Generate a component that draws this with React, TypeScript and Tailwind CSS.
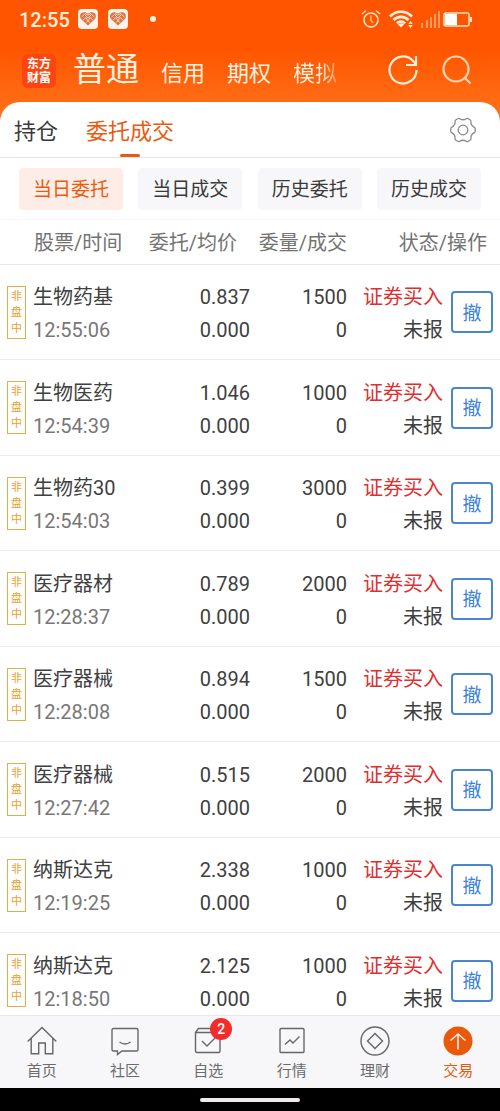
import type { ReactNode } from "react";

type Order = { name: string; time: string; price: string; quantity: string };

const orders: Order[] = [
  { name: "生物药基", time: "12:55:06", price: "0.837", quantity: "1500" },
  { name: "生物医药", time: "12:54:39", price: "1.046", quantity: "1000" },
  { name: "生物药30", time: "12:54:03", price: "0.399", quantity: "3000" },
  { name: "医疗器材", time: "12:28:37", price: "0.789", quantity: "2000" },
  { name: "医疗器械", time: "12:28:08", price: "0.894", quantity: "1500" },
  { name: "医疗器械", time: "12:27:42", price: "0.515", quantity: "2000" },
  { name: "纳斯达克", time: "12:19:25", price: "2.338", quantity: "1000" },
  { name: "纳斯达克", time: "12:18:50", price: "2.125", quantity: "1000" },
];

const filters = ["当日委托", "当日成交", "历史委托", "历史成交"];

function HeartBadge() {
  return (
    <svg width="20" height="20" viewBox="0 0 20 20" aria-hidden="true">
      <rect width="20" height="20" rx="4" fill="#fff3ea" />
      <path d="M10 16.500 3 10C.6 6.500 3 2.800 7 3.300L10 4.500l3-1.200c4-.5 6.400 3.200 4 6.700z" fill="#dd7546" />
      <path d="m3.500 8 3-2.500L10 9l3.500-3.500 3 2.500M5 11l3-2.500L10 12l2-3.500 3 2.500M8 13.500l2-1.500 2 1.500M7 4.500l3 1.500 3-1.500" fill="none" stroke="#ffe9d6" strokeWidth=".8" />
    </svg>
  );
}

function StatusBar() {
  return (
    <div className="flex h-[38px] items-center pl-[19px] pr-7 text-[#fff1df]">
      <span className="pt-px text-xl font-medium">12:55</span>
      <div className="ml-2 flex gap-[10px]">
        <HeartBadge />
        <HeartBadge />
      </div>
      <span className="ml-[22px] size-[6px] rounded-full bg-[#fff1df]" />
      <div className="ml-auto flex items-center gap-2">
        <svg width="20" height="20" viewBox="0 0 20 20" fill="none" stroke="#ffe3c2" strokeWidth="1.600" strokeLinecap="round" aria-hidden="true">
          <circle cx="10" cy="11" r="7" />
          <path d="M1.500 4.500 4.500 2M18.500 4.500l-3-2.500" />
          <path d="M9.800 7v4.300l2 2.200" stroke="#ffc34d" />
        </svg>
        <svg width="24" height="20" viewBox="0 0 24 20" fill="none" stroke="#fff1df" strokeWidth="2.600" aria-hidden="true">
          <path d="M1 7.500a15 15 0 0 1 22 0M4.500 11a10.500 10.500 0 0 1 15 0M8 14.300a5.500 5.500 0 0 1 8 0" />
          <path d="m9 15.500 3 3 3-3a4 4 0 0 0-6 0z" fill="#fff1df" stroke="none" />
          <path d="m21.500 12 2.200 3h-4.400zM21.500 19l2.200-3h-4.400z" fill="#fff1df" stroke="none" />
        </svg>
        <div className="flex items-center gap-[2px]">
          <svg width="20" height="18" viewBox="0 0 20 18" fill="#ff9d63" aria-hidden="true">
            <rect x="0" y="13" width="2" height="5" />
            <rect x="5" y="10" width="2" height="8" />
            <rect x="9" y="7" width="2" height="11" />
            <rect x="13" y="4" width="2" height="14" />
            <rect x="17" y="1" width="2" height="17" />
          </svg>
          <svg width="29" height="15" viewBox="0 0 29 15" aria-hidden="true">
            <rect x="1" y="1" width="25" height="13" rx="2" fill="none" stroke="#ffe3c2" strokeWidth="1.500" />
            <rect x="2" y="2" width="12" height="11" fill="#fff" />
            <rect x="27" y="5" width="2" height="5" fill="#ffe3c2" />
          </svg>
        </div>
      </div>
    </div>
  );
}

function Header() {
  return (
    <header className="flex h-16 items-center pl-[22px] pr-7 pt-px text-[#fff1df]">
      <div className="flex size-[34px] flex-col items-center justify-center rounded-md bg-[#fc4510] text-xs leading-[14px] font-bold text-white">
        <span>东方</span>
        <span>财富</span>
      </div>
      <nav className="ml-[17px] flex items-baseline gap-[22px] whitespace-nowrap pt-[3px] text-[22px] leading-10">
        <a href="#normal" className="text-[33px]">普通</a>
        <a href="#credit">信用</a>
        <a href="#option">期权</a>
        <a href="#mock" className="bg-linear-to-r from-[#fff1df] from-60% to-[#ff9450] bg-clip-text text-transparent">模拟</a>
      </nav>
      <div className="ml-auto flex items-center gap-6 pb-px">
        <button type="button" aria-label="刷新">
          <svg width="30" height="30" viewBox="0 0 30 30" fill="none" stroke="#ffeeda" strokeWidth="2.200">
            <path d="M28.500 15A13.500 13.500 0 1 1 24.600 5.500L28 9" />
            <path d="M28 1v9h-10" />
          </svg>
        </button>
        <button type="button" aria-label="搜索">
          <svg width="30" height="30" viewBox="0 0 30 30" fill="none" stroke="#ffd5b0" strokeWidth="2.200">
            <circle cx="14" cy="14" r="12.500" />
            <path d="m23 23 5.500 5.500" />
          </svg>
        </button>
      </div>
    </header>
  );
}

function Tabs() {
  return (
    <div className="flex h-14 shrink-0 items-stretch border-b border-[#e4e4e6] pl-[14px] pr-6 text-[22px]">
      <button type="button" className="pt-[3px] text-[#3a3a3a]">持仓</button>
      <button type="button" className="relative ml-7 pt-[3px] text-[#ea5b10]">
        委托成交
        <span className="absolute bottom-0 left-1/2 h-[3px] w-5 -translate-x-1/2 rounded-full bg-[#ea5b10]" />
      </button>
      <button type="button" aria-label="设置" className="ml-auto">
        <svg width="26" height="26" viewBox="0 0 26 26" fill="none" stroke="#8a8a8a" strokeWidth="1.300" strokeLinejoin="round">
          <path d="M8.200 1.500Q9 1 9.800 1.700 13 3.800 16.200 1.700 17 1 17.800 1.500L20.300 3Q21 3.500 20.900 4.500 20.800 8.600 24.300 10.300 25.200 10.800 25.200 11.600V14.400Q25.200 15.200 24.300 15.700 20.800 17.400 20.900 21.500 21 22.500 20.300 23L17.800 24.500Q17 25 16.200 24.300 13 22.200 9.800 24.300 9 25 8.200 24.500L5.700 23Q5 22.500 5.100 21.500 5.200 17.400 1.700 15.700.8 15.200.8 14.400V11.600Q.8 10.800 1.700 10.300 5.200 8.600 5.100 4.500 5 3.500 5.700 3Z" />
          <circle cx="13" cy="13" r="4.800" />
        </svg>
      </button>
    </div>
  );
}

function OrderTable() {
  return (
    <div className="min-h-0 flex-1 overflow-y-auto [scrollbar-width:none]">
      <table className="w-full table-fixed border-separate border-spacing-0 text-xl">
        <colgroup>
          <col />
          <col className="w-[22%]" />
          <col className="w-[97px]" />
          <col className="w-24" />
          <col className="w-[57px]" />
        </colgroup>
        <thead className="text-[#737373]">
          <tr className="h-[46px] whitespace-nowrap *:border-y *:border-b-[#e8e8e8] *:border-t-[#f6f6f6] *:px-0 *:pt-[2px] *:pb-0 *:font-normal">
            <th scope="col" className="text-left"><span className="pl-[34px]">股票/时间</span></th>
            <th scope="col" className="text-right"><span className="pr-[13px]">委托/均价</span></th>
            <th scope="col" className="text-right"><span>委量/成交</span></th>
            <th scope="col" colSpan={2} className="text-right"><span className="pr-[13px]">状态/操作</span></th>
          </tr>
        </thead>
        <tbody className="leading-[33px] text-[#404040]">
          {orders.map((order) => (
            <tr key={order.time} className="whitespace-nowrap odd:h-[95px] even:h-24 *:border-b *:border-[#ebebeb] *:p-0">
              <td>
                <div className="flex items-center gap-[7px] pl-[7px]">
                  <span className="flex w-[19px] flex-col items-center border border-[#e6ac45] pt-[2px] pb-px text-[11px] leading-4 text-[#e9a02c]">
                    <span>非</span>
                    <span>盘</span>
                    <span>中</span>
                  </span>
                  <div className="pt-1">
                    <div>{order.name}</div>
                    <div className="text-[#777]">{order.time}</div>
                  </div>
                </div>
              </td>
              <td className="text-right">
                <div className="pt-1">{order.price}</div>
                <div>0.000</div>
              </td>
              <td className="text-right">
                <div className="pt-1">{order.quantity}</div>
                <div>0</div>
              </td>
              <td className="text-right">
                <div className="pt-1 text-[#dd3030]">证券买入</div>
                <div>未报</div>
              </td>
              <td>
                <button type="button" className="ml-2 flex size-[42px] items-center justify-center rounded-[4px] border-2 border-[#4a86cf] pt-[2px] text-[19px] text-[#3f83d3]">
                  撤
                </button>
              </td>
            </tr>
          ))}
        </tbody>
      </table>
    </div>
  );
}

function NavIcon({ children }: { children: ReactNode }) {
  return (
    <svg width="30" height="30" viewBox="0 0 30 30" fill="none" stroke="#666" strokeWidth="1.400" aria-hidden="true">
      {children}
    </svg>
  );
}

function NavItem({ label, active, badge, children }: { label: string; active?: boolean; badge?: string; children: ReactNode }) {
  return (
    <a href={"#" + label} className={active ? "flex flex-1 flex-col items-center pt-[10px] text-[#e9590c]" : "flex flex-1 flex-col items-center pt-[10px] text-[#6b6b6b]"}>
      <span className="relative">
        <NavIcon>{children}</NavIcon>
        {badge && (
          <span className="absolute -top-2 left-[17px] flex size-[22px] items-center justify-center rounded-full bg-[#f22b2b] text-sm font-medium text-white">
            {badge}
          </span>
        )}
      </span>
      <span className="text-[15px] leading-[30px]">{label}</span>
    </a>
  );
}

function BottomNav() {
  return (
    <nav className="flex h-[73px] shrink-0 border-t border-[#e9e9eb] bg-[#f7f7f9]">
      <NavItem label="首页">
        <path d="M.7 15.500 15 1.500l14.300 14M4.200 12.500v15.300h7.500V17h6.600v10.800h7.500V12.500" />
      </NavItem>
      <NavItem label="社区">
        <path d="M3.500 2.500h23Q28 2.500 28 4V23.500Q28 25 26.500 25H12L7.500 28.500V25H3.500Q2 25 2 23.500V4Q2 2.500 3.500 2.500ZM9.500 16q5.500 4 11 0" />
      </NavItem>
      <NavItem label="自选" badge="2">
        <path d="M2.500 6.500h24.500V25q0 1.500-1.500 1.500H4Q2.500 26.500 2.500 25ZM2.500 6.500l3-4h18.500l3 4M9 15l5 5 8.500-8.500" />
      </NavItem>
      <NavItem label="行情">
        <rect x="3" y="2.500" width="24" height="24" rx="1" />
        <path d="m8 18.500 5-4.500 3 3 6.500-6.500" />
      </NavItem>
      <NavItem label="理财">
        <circle cx="15" cy="15" r="14" />
        <path d="m15 7.500 7.500 7.500-7.500 7.500L7.500 15Z" />
      </NavItem>
      <NavItem label="交易" active>
        <circle cx="15" cy="15" r="14.500" fill="#e9590c" stroke="none" />
        <path d="M15 23.500V8M7.500 14.500 15 8l7.500 6.500" stroke="#ffe9dc" strokeWidth="1.600" />
      </NavItem>
    </nav>
  );
}

export default function App() {
  return (
    <div className="flex h-screen flex-col bg-white font-[Roboto,'Noto_Sans_CJK_SC',sans-serif]">
      <div className="shrink-0 bg-linear-to-b from-[#ff5500] from-40% to-[#ff7319]">
        <StatusBar />
        <Header />
        <div className="h-5 rounded-t-[20px] bg-white" />
      </div>
      <main className="-mt-5 flex min-h-0 flex-1 flex-col">
        <Tabs />
        <div className="flex shrink-0 justify-between px-[19px] pt-[10px] pb-[9px]">
          {filters.map((filter, index) => (
            <button
              key={filter}
              type="button"
              className={
                index === 0
                  ? "h-[42px] w-[104px] rounded-[4px] bg-[#feede6] pt-[3px] text-[19px] text-[#ea5b10]"
                  : "h-[42px] w-[104px] rounded-[4px] bg-[#f7f7f9] pt-[3px] text-[19px] text-[#3a3a3a]"
              }
            >
              {filter}
            </button>
          ))}
        </div>
        <OrderTable />
        <BottomNav />
      </main>
      <footer className="flex h-[23px] shrink-0 items-center justify-center bg-black">
        <div className="h-1 w-1/5 rounded-full bg-[#f0e8ec]" />
      </footer>
    </div>
  );
}
